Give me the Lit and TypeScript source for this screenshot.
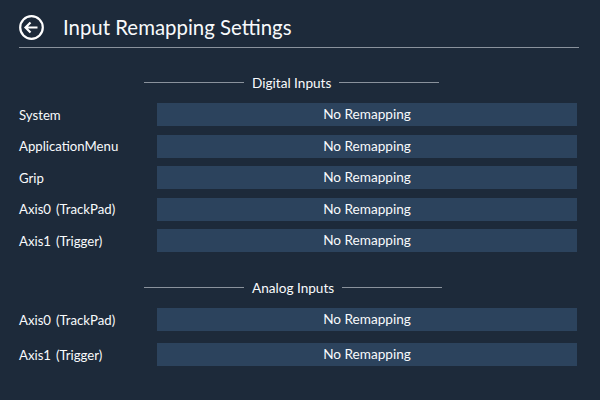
import { LitElement, html, css } from "lit";
import { customElement } from "lit/decorators.js";

@customElement("app-root")
export class AppRoot extends LitElement {
  static styles = css`
    :host { display: block; width: 600px; height: 400px; overflow: hidden; background: #1d2a3a; color: #f8fafc; font-family: Lato, sans-serif; font-size: 13.6px; }
    .page { display: flex; flex-direction: column; padding: 12px 21px 0 19px; box-sizing: border-box; height: 400px; }
    .header { display: flex; align-items: center; gap: 19px; height: 30px; padding-bottom: 5px; border-bottom: 1px solid #8a929c; }
    .header svg { width: 25px; height: 25px; flex: none; }
    .title { font-size: 20.4px; font-weight: 400; line-height: 30px; }
    .section { display: flex; align-items: center; height: 20px; padding-left: 125px; gap: 8px; }
    .section .text { position: relative; top: 1px; }
    .line { width: 100px; height: 1px; background: #8a929c; }
    .digital { margin-top: 24px; }
    .analog { margin-top: 25px; }
    .rows { display: flex; flex-direction: column; margin-top: 11px; padding-right: 2px; }
    .digital-rows { gap: 8.5px; }
    .analog-rows { gap: 12px; }
    .row { display: flex; align-items: center; height: 23px; }
    .label { width: 138px; flex: none; white-space: nowrap; font-size: 13.2px; word-spacing: 1.5px; }
    .btn { flex: 1; height: 23px; background: #2c435d; text-align: center; line-height: 23px; }
  `;
  private row(l: string) {
    return html`<div class="row"><div class="label">${l}</div><div class="btn">No Remapping</div></div>`;
  }
  render() {
    return html`<div class="page">
      <div class="header">
        <svg viewBox="0 0 25 25" fill="none" stroke="#fff"><circle cx="12.5" cy="12.5" r="11.3" stroke-width="2.2"/><path d="M18.5 12.5H6.5M11.5 7.5l-5 5 5 5" stroke-width="2.2"/></svg>
        <div class="title">Input Remapping Settings</div>
      </div>
      <div class="section digital"><span class="line"></span><span class="text">Digital Inputs</span><span class="line"></span></div>
      <div class="rows digital-rows">${["System","ApplicationMenu","Grip","Axis0 (TrackPad)","Axis1 (Trigger)"].map((l)=>this.row(l))}</div>
      <div class="section analog"><span class="line"></span><span class="text">Analog Inputs</span><span class="line"></span></div>
      <div class="rows analog-rows">${["Axis0 (TrackPad)","Axis1 (Trigger)"].map((l)=>this.row(l))}</div>
    </div>`;
  }
}
